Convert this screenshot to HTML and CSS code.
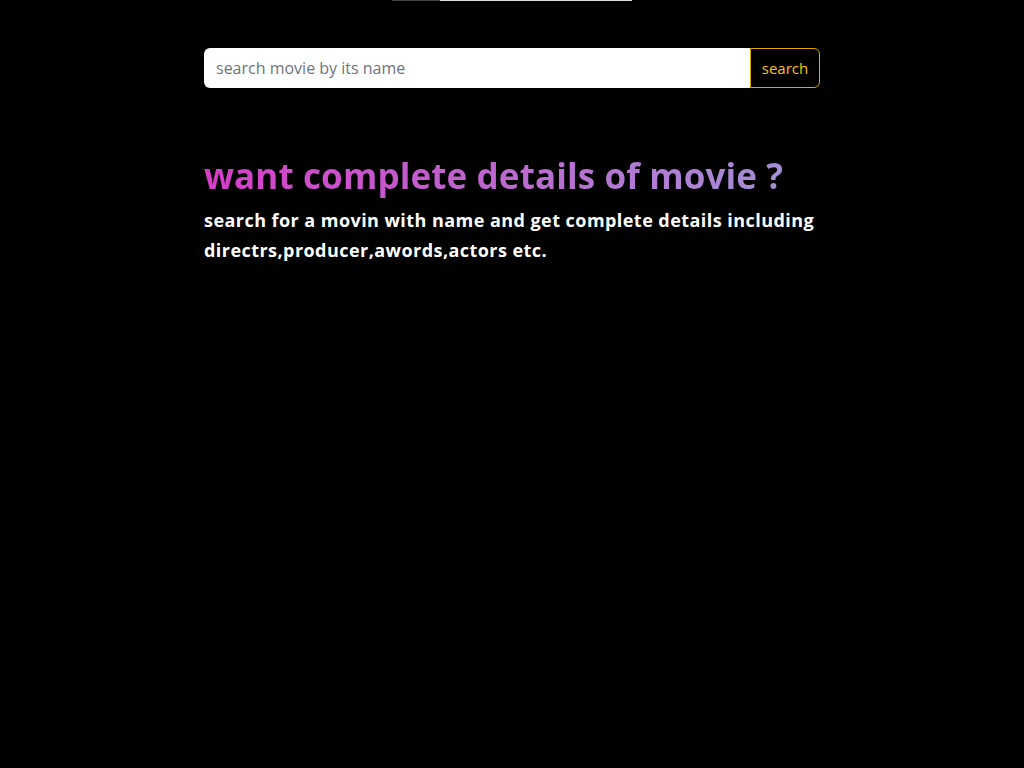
FILE: index.html
```html
<!DOCTYPE html>
<html lang="en">
<head>
<meta charset="utf-8">
<title>Movie search</title>
<link rel="stylesheet" href="styles.css">
</head>
<body>
<div class="topline"><span class="topline-dark"></span><span class="topline-light"></span></div>
<main class="container">
  <form class="search">
    <input class="search-input" type="text" placeholder="search movie by its name">
    <button class="search-btn" type="button">search</button>
  </form>
  <section class="intro">
    <h1 class="intro-title">want complete details of movie ?</h1>
    <p class="intro-text">search for a movin with name and get complete details including directrs,producer,awords,actors etc.</p>
  </section>
</main>
</body>
</html>
```
FILE: styles.css
```css
html, body {
  margin: 0;
  padding: 0;
  background: #000;
  height: 100%;
}
body {
  font-family: "Open Sans", "Noto Sans", sans-serif;
  color: #fff;
}
.topline {
  display: flex;
  width: 240px;
  height: 1px;
  margin: 0 auto 0 392px;
}
.topline-dark { width: 48px; background: #444; }
.topline-light { flex: 1; background: #ddd; }
.container {
  width: 616px;
  margin: 47px auto 0;
}
.search {
  display: flex;
  height: 40px;
  margin: 0;
}
.search-input {
  flex: 1;
  border: 0;
  border-radius: 6px 0 0 6px;
  padding: 0 12px;
  font: 16px "Open Sans", sans-serif;
  color: #212529;
  background: #fff;
  outline: none;
}
.search-input::placeholder { color: #6c757d; }
.search-btn {
  width: 70px;
  background: #000;
  color: #ffc107;
  border: 1px solid #e0a800;
  border-radius: 0 6px 6px 0;
  font: 15px "Open Sans", sans-serif;
  padding: 0;
}
.intro { margin-top: 65px; }
.intro-title {
  margin: 0;
  font-size: 35px;
  font-weight: 700;
  line-height: 46px;
  letter-spacing: 0.12px;
  display: inline-block;
  background: linear-gradient(90deg, #d63ec8 0%, #a58fd6 100%);
  -webkit-background-clip: text;
  background-clip: text;
  color: transparent;
}
.intro-text {
  margin: 6px 0 0;
  font-size: 18px;
  font-weight: 700;
  line-height: 30px;
  letter-spacing: 0.45px;
}
```
